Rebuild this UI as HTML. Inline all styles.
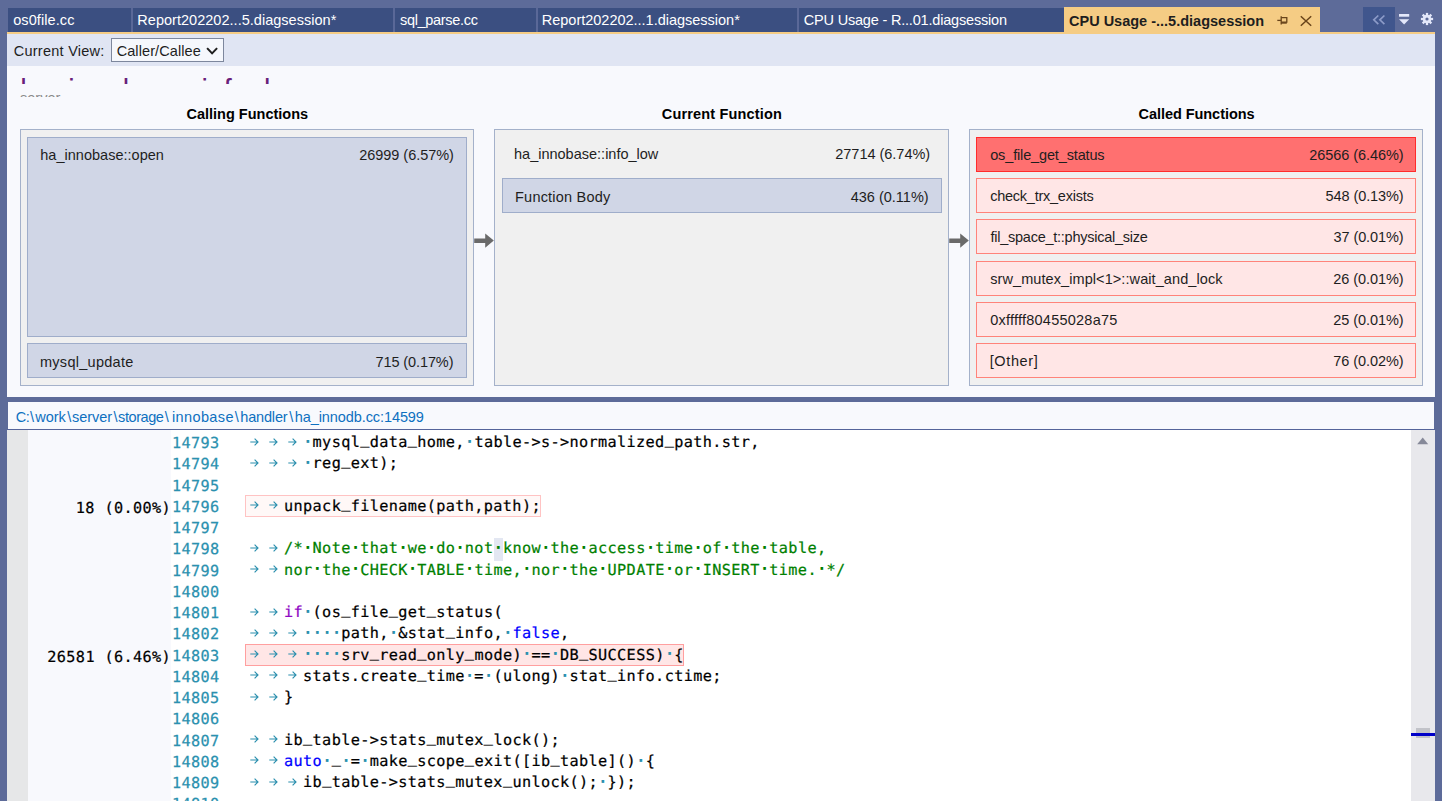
<!DOCTYPE html>
<html lang="en"><head><meta charset="utf-8"><title>CPU Usage - diagsession</title>
<style>
html,body{margin:0;padding:0}
body{width:1442px;height:801px;overflow:hidden;background:#5d6b99;position:relative;font-family:"Liberation Sans", sans-serif;}
.abs,.t,.box{position:absolute}
.t{white-space:pre;line-height:20px;font-family:"Liberation Sans", sans-serif}
.box{box-sizing:border-box}
.tab{position:absolute;top:8px;height:24px;background:#3b4f81}
.outer{position:absolute;box-sizing:border-box;top:129px;height:257px;background:#f0f0f0;border:1px solid #a4b1ca}
.rb{position:absolute;box-sizing:border-box;background:#d0d6e6;border:1px solid #9fadca}
.rr{position:absolute;box-sizing:border-box;background:#ffe6e6;border:1px solid #ff837a}
.code{position:absolute;left:247px;white-space:pre;font-family:"DejaVu Sans Mono", "Liberation Mono", monospace;font-size:15.2px;text-rendering:geometricPrecision;line-height:21.25px;height:21.25px;color:#000;letter-spacing:0.369px;-webkit-text-stroke:0.22px}
.ln{position:absolute;left:172.5px;white-space:pre;font-family:"DejaVu Sans Mono", "Liberation Mono", monospace;font-size:15.2px;text-rendering:geometricPrecision;line-height:21.25px;height:21.25px;color:#2b91af;letter-spacing:0.369px;-webkit-text-stroke:0.25px}
.pf{position:absolute;white-space:pre;font-family:"DejaVu Sans Mono", "Liberation Mono", monospace;font-size:15.2px;text-rendering:geometricPrecision;line-height:21.25px;height:21.25px;color:#000;text-align:right;width:164px;left:7px;letter-spacing:0.369px;-webkit-text-stroke:0.22px}
.ws{color:#2b91af}
.d{display:inline-block;width:9.52px;height:21.25px;line-height:21.25px;vertical-align:top;text-align:center;letter-spacing:0;font-size:16px;font-weight:bold;position:relative;top:-1.2px;-webkit-text-stroke:0}
.tb{display:inline-block;width:19.04px;letter-spacing:0;position:relative;height:21.25px;vertical-align:top}
.tb svg{position:absolute;left:3.6px;top:5.65px}
.u{position:relative;top:-2.8px}
.c{color:#008000}.k{color:#0000ff}.p{color:#8f08c4}
</style></head><body>

<div class="tab" style="left:8px;width:123px"></div>
<div class="tab" style="left:133px;width:260px"></div>
<div class="tab" style="left:395px;width:141px"></div>
<div class="tab" style="left:538px;width:259px"></div>
<div class="tab" style="left:799px;width:265px"></div>
<div class="abs" style="left:131px;top:8px;width:2px;height:23px;background:#5a6898"></div>
<div class="abs" style="left:393px;top:8px;width:2px;height:23px;background:#5a6898"></div>
<div class="abs" style="left:536px;top:8px;width:2px;height:23px;background:#5a6898"></div>
<div class="abs" style="left:797px;top:8px;width:2px;height:23px;background:#5a6898"></div>
<div class="abs" style="left:1064px;top:7px;width:256px;height:26px;background:#f5cc84"></div>
<div class="abs" style="left:7px;top:32px;width:1428px;height:2px;background:#f5cc84"></div>
<span id="tab1" class="t" style="left:13.20px;top:9.98px;font-size:14.5px;font-weight:400;color:#ffffff;letter-spacing:0.089px;">os0file.cc</span>
<span id="tab2" class="t" style="left:137.35px;top:9.98px;font-size:14.5px;font-weight:400;color:#ffffff;letter-spacing:0.023px;">Report202202...5.diagsession*</span>
<span id="tab3" class="t" style="left:400.00px;top:9.98px;font-size:14.5px;font-weight:400;color:#ffffff;letter-spacing:-0.318px;">sql_parse.cc</span>
<span id="tab4" class="t" style="left:541.75px;top:9.98px;font-size:14.5px;font-weight:400;color:#ffffff;letter-spacing:-0.009px;">Report202202...1.diagsession*</span>
<span id="tab5" class="t" style="left:803.75px;top:9.98px;font-size:14.5px;font-weight:400;color:#ffffff;letter-spacing:-0.190px;">CPU Usage - R...01.diagsession</span>
<span id="tab6" class="t" style="left:1069.00px;top:10.98px;font-size:14.5px;font-weight:700;color:#1e1e1e;letter-spacing:0.000px;">CPU Usage -...5.diagsession</span>
<svg class="abs" style="left:1275px;top:13px" width="14" height="14" viewBox="0 0 14 14"><g fill="none" stroke="#69441a" stroke-width="1.3"><path d="M2.3 7.4H6.2"/><path d="M6.2 3.2V11.4"/><path d="M6.2 4.6H11.8V9.2H6.2"/><path d="M6.2 9.9H11.8" stroke-width="1.6"/></g></svg>
<svg class="abs" style="left:1299px;top:14px" width="14" height="14" viewBox="0 0 14 14"><path d="M1.8 2.2L12.2 11.8M12.2 2.2L1.8 11.8" stroke="#69441a" stroke-width="1.5" fill="none"/></svg>
<div class="abs" style="left:1363px;top:7px;width:32px;height:25px;background:#40568d"></div>
<svg class="abs" style="left:1371px;top:13px" width="16" height="14" viewBox="0 0 16 14"><path d="M7.3 2.5L2.8 6.8L7.3 11.1M13.4 2.5L8.9 6.8L13.4 11.1" stroke="#8c9bc8" stroke-width="1.7" fill="none"/></svg>
<svg class="abs" style="left:1397px;top:12px" width="14" height="14" viewBox="0 0 14 14"><rect x="2" y="2" width="10.2" height="2.7" fill="#e4e8fa"/><path d="M2 7.2H12.2L7.1 12.4Z" fill="#e4e8fa"/></svg>
<svg class="abs" style="left:1420.1px;top:12px" width="14" height="14" viewBox="-7 -7 14 14"><rect x="-1.15" y="-6.1" width="2.3" height="3" transform="rotate(0)" fill="#e4e8fa"/><rect x="-1.15" y="-6.1" width="2.3" height="3" transform="rotate(45)" fill="#e4e8fa"/><rect x="-1.15" y="-6.1" width="2.3" height="3" transform="rotate(90)" fill="#e4e8fa"/><rect x="-1.15" y="-6.1" width="2.3" height="3" transform="rotate(135)" fill="#e4e8fa"/><rect x="-1.15" y="-6.1" width="2.3" height="3" transform="rotate(180)" fill="#e4e8fa"/><rect x="-1.15" y="-6.1" width="2.3" height="3" transform="rotate(225)" fill="#e4e8fa"/><rect x="-1.15" y="-6.1" width="2.3" height="3" transform="rotate(270)" fill="#e4e8fa"/><rect x="-1.15" y="-6.1" width="2.3" height="3" transform="rotate(315)" fill="#e4e8fa"/><circle r="2.95" fill="none" stroke="#e4e8fa" stroke-width="2.7"/></svg>
<div class="abs" style="left:7px;top:34px;width:1428px;height:32px;background:#e0e5f3"></div>
<span id="cv" class="t" style="left:13.75px;top:40.98px;font-size:14.5px;font-weight:400;color:#1e1e1e;letter-spacing:0.250px;">Current View:</span>
<div class="box" style="left:111px;top:38px;width:113px;height:24px;background:#f5f7fc;border:1px solid #7d879d"></div>
<span id="cc" class="t" style="left:116.65px;top:40.98px;font-size:14.5px;font-weight:400;color:#1e1e1e;letter-spacing:0.092px;">Caller/Callee</span>
<svg class="abs" style="left:205px;top:44px" width="14" height="12" viewBox="0 0 14 12"><path d="M2.1 4.1L7.1 9.4L12.1 4.1" stroke="#1e1e1e" stroke-width="2" fill="none"/></svg>
<div class="abs" style="left:7px;top:66px;width:1428px;height:331px;background:#f8f9fd"></div>
<div class="abs" style="left:7px;top:70px;width:700px;height:14px;overflow:hidden"><span id="hdr" class="t" style="left:13.2px;top:3.9px;font-size:28.85px;line-height:32px;color:#68217a;letter-spacing:0px">ha_innobase::info_low</span></div>
<div class="abs" style="left:7px;top:88px;width:300px;height:9px;overflow:hidden"><span id="srv" class="t" style="left:13px;top:0.1px;font-size:14.5px;color:#8a8a8a;letter-spacing:0px">server</span></div>
<span id="h1" class="t" style="left:186.50px;top:104.18px;font-size:14.5px;font-weight:700;color:#000;letter-spacing:0.000px;">Calling Functions</span>
<span id="h2" class="t" style="left:661.80px;top:104.18px;font-size:14.5px;font-weight:700;color:#000;letter-spacing:0.163px;">Current Function</span>
<span id="h3" class="t" style="left:1138.50px;top:104.18px;font-size:14.5px;font-weight:700;color:#000;letter-spacing:-0.050px;">Called Functions</span>
<div class="outer" style="left:20px;width:454px"></div>
<div class="outer" style="left:494px;width:455px"></div>
<div class="outer" style="left:969px;width:454px"></div>
<svg class="abs" style="left:474px;top:232px" width="20" height="18" viewBox="0 0 20 18"><path d="M0.2 6.4H11.2V1.6L19.8 8.6L11.2 15.8V11H0.2Z" fill="#6a6a6a"/></svg>
<svg class="abs" style="left:949px;top:232px" width="20" height="18" viewBox="0 0 20 18"><path d="M0.2 6.4H11.2V1.6L19.8 8.6L11.2 15.8V11H0.2Z" fill="#6a6a6a"/></svg>
<div class="rb" style="left:27px;top:137px;width:440px;height:200px"></div>
<div class="rb" style="left:27px;top:343px;width:440px;height:35px"></div>
<span id="p1a" class="t" style="left:40.25px;top:145.28px;font-size:14.5px;font-weight:400;color:#1e1e1e;letter-spacing:0.016px;">ha_innobase::open</span>
<span id="p1b" class="t" style="left:359.25px;top:145.28px;font-size:14.5px;font-weight:400;color:#1e1e1e;letter-spacing:-0.042px;">26999 (6.57%)</span>
<span id="p1c" class="t" style="left:40.00px;top:351.98px;font-size:14.5px;font-weight:400;color:#1e1e1e;letter-spacing:0.273px;">mysql_update</span>
<span id="p1d" class="t" style="left:375.45px;top:351.98px;font-size:14.5px;font-weight:400;color:#1e1e1e;letter-spacing:-0.095px;">715 (0.17%)</span>
<span id="p2a" class="t" style="left:514.00px;top:143.98px;font-size:14.5px;font-weight:400;color:#1e1e1e;letter-spacing:0.002px;">ha_innobase::info_low</span>
<span id="p2b" class="t" style="left:835.25px;top:143.98px;font-size:14.5px;font-weight:400;color:#1e1e1e;letter-spacing:-0.017px;">27714 (6.74%)</span>
<div class="rb" style="left:502px;top:178px;width:440px;height:35px"></div>
<span id="p2c" class="t" style="left:515.05px;top:186.58px;font-size:14.5px;font-weight:400;color:#1e1e1e;letter-spacing:0.204px;">Function Body</span>
<span id="p2d" class="t" style="left:850.75px;top:186.58px;font-size:14.5px;font-weight:400;color:#1e1e1e;letter-spacing:-0.005px;">436 (0.11%)</span>
<div class="rr" style="left:976px;top:137px;width:440px;height:35px;background:#ff7070;border-color:#ff2c2c;"></div>
<span id="p3n0" class="t" style="left:990.20px;top:145.48px;font-size:14.5px;font-weight:400;color:#1e1e1e;letter-spacing:-0.144px;">os_file_get_status</span>
<span id="p3v0" class="t" style="left:1309.25px;top:145.48px;font-size:14.5px;font-weight:400;color:#1e1e1e;letter-spacing:-0.067px;">26566 (6.46%)</span>
<div class="rr" style="left:976px;top:178px;width:440px;height:35px;"></div>
<span id="p3n1" class="t" style="left:990.20px;top:186.48px;font-size:14.5px;font-weight:400;color:#1e1e1e;letter-spacing:-0.243px;">check_trx_exists</span>
<span id="p3v1" class="t" style="left:1325.50px;top:186.48px;font-size:14.5px;font-weight:400;color:#1e1e1e;letter-spacing:-0.080px;">548 (0.13%)</span>
<div class="rr" style="left:976px;top:219px;width:440px;height:35px;"></div>
<span id="p3n2" class="t" style="left:990.45px;top:227.48px;font-size:14.5px;font-weight:400;color:#1e1e1e;letter-spacing:-0.246px;">fil_space_t::physical_size</span>
<span id="p3v2" class="t" style="left:1333.50px;top:227.48px;font-size:14.5px;font-weight:400;color:#1e1e1e;letter-spacing:-0.089px;">37 (0.01%)</span>
<div class="rr" style="left:976px;top:261px;width:440px;height:35px;"></div>
<span id="p3n3" class="t" style="left:990.20px;top:269.48px;font-size:14.5px;font-weight:400;color:#1e1e1e;letter-spacing:0.084px;">srw_mutex_impl&lt;1&gt;::wait_and_lock</span>
<span id="p3v3" class="t" style="left:1333.25px;top:269.48px;font-size:14.5px;font-weight:400;color:#1e1e1e;letter-spacing:-0.061px;">26 (0.01%)</span>
<div class="rr" style="left:976px;top:302px;width:440px;height:35px;"></div>
<span id="p3n4" class="t" style="left:990.20px;top:310.48px;font-size:14.5px;font-weight:400;color:#1e1e1e;letter-spacing:0.235px;">0xfffff80455028a75</span>
<span id="p3v4" class="t" style="left:1333.25px;top:310.48px;font-size:14.5px;font-weight:400;color:#1e1e1e;letter-spacing:-0.061px;">25 (0.01%)</span>
<div class="rr" style="left:976px;top:343px;width:440px;height:35px;"></div>
<span id="p3n5" class="t" style="left:989.70px;top:351.48px;font-size:14.5px;font-weight:400;color:#1e1e1e;letter-spacing:0.625px;">[Other]</span>
<span id="p3v5" class="t" style="left:1333.25px;top:351.48px;font-size:14.5px;font-weight:400;color:#1e1e1e;letter-spacing:-0.061px;">76 (0.02%)</span>
<div class="abs" style="left:8px;top:402px;width:1426px;height:27px;background:#f8f9fd"></div>
<span id="path0" class="t" style="left:15.65px;top:406.88px;font-size:14.5px;font-weight:400;color:#0e70c0;letter-spacing:-0.300px;">C:</span>
<span id="path1" class="t" style="left:30.10px;top:406.88px;font-size:14.5px;font-weight:400;color:#0e70c0;letter-spacing:0.000px;">\</span>
<span id="path2" class="t" style="left:35.20px;top:406.88px;font-size:14.5px;font-weight:400;color:#0e70c0;letter-spacing:0.000px;">work</span>
<span id="path3" class="t" style="left:67.15px;top:406.88px;font-size:14.5px;font-weight:400;color:#0e70c0;letter-spacing:0.000px;">\</span>
<span id="path4" class="t" style="left:72.00px;top:406.88px;font-size:14.5px;font-weight:400;color:#0e70c0;letter-spacing:-0.020px;">server</span>
<span id="path5" class="t" style="left:113.50px;top:406.88px;font-size:14.5px;font-weight:400;color:#0e70c0;letter-spacing:0.000px;">\</span>
<span id="path6" class="t" style="left:118.10px;top:406.88px;font-size:14.5px;font-weight:400;color:#0e70c0;letter-spacing:-0.425px;">storage</span>
<span id="path7" class="t" style="left:164.85px;top:406.88px;font-size:14.5px;font-weight:400;color:#0e70c0;letter-spacing:0.000px;">\</span>
<span id="path8" class="t" style="left:171.90px;top:406.88px;font-size:14.5px;font-weight:400;color:#0e70c0;letter-spacing:0.393px;">innobase</span>
<span id="path9" class="t" style="left:234.65px;top:406.88px;font-size:14.5px;font-weight:400;color:#0e70c0;letter-spacing:0.000px;">\</span>
<span id="path10" class="t" style="left:240.30px;top:406.88px;font-size:14.5px;font-weight:400;color:#0e70c0;letter-spacing:-0.175px;">handler</span>
<span id="path11" class="t" style="left:289.15px;top:406.88px;font-size:14.5px;font-weight:400;color:#0e70c0;letter-spacing:0.000px;">\</span>
<span id="path12" class="t" style="left:294.70px;top:406.88px;font-size:14.5px;font-weight:400;color:#0e70c0;letter-spacing:-0.082px;">ha_innodb.cc:14599</span>
<div class="abs" style="left:7px;top:429px;width:1428px;height:1px;background:#55649a"></div>
<div class="abs" style="left:7px;top:430px;width:1428px;height:371px;background:#fff;overflow:hidden" id="codewrap">
<div class="abs" style="left:0;top:0;width:21px;height:371px;background:#e6e7e8"></div>
<div class="abs" style="left:21px;top:0;width:143px;height:371px;background:#f8f9fd"></div>
<div class="abs" style="left:1404px;top:0;width:24px;height:371px;background:#e8e8ec"></div>
<svg class="abs" style="left:1404px;top:0" width="24" height="24" viewBox="0 0 24 24"><path d="M6.2 14.2H17.2L11.7 7.6Z" fill="#868999"/></svg>
<div class="abs" style="left:1409px;top:298px;width:14px;height:10px;background:#c2c3c9"></div>
<div class="abs" style="left:1404px;top:303.4px;width:24px;height:3px;background:#0000c8"></div>
<div class="ln" style="left:165px;top:3.00px">14793</div>
<div class="code" style="left:239px;top:2.00px"><span class="tb"><svg width="9" height="8" viewBox="0 0 9 8"><path d="M0.3 4H8M4.6 0.6L8 4L4.6 7.4" stroke="#2b8fae" stroke-width="1.15" fill="none"/></svg></span><span class="tb"><svg width="9" height="8" viewBox="0 0 9 8"><path d="M0.3 4H8M4.6 0.6L8 4L4.6 7.4" stroke="#2b8fae" stroke-width="1.15" fill="none"/></svg></span><span class="tb"><svg width="9" height="8" viewBox="0 0 9 8"><path d="M0.3 4H8M4.6 0.6L8 4L4.6 7.4" stroke="#2b8fae" stroke-width="1.15" fill="none"/></svg></span><span class="d ws">·</span>mysql<span class="u">_</span>data<span class="u">_</span>home,<span class="d ws">·</span>table-&gt;s-&gt;normalized<span class="u">_</span>path.str,</div>
<div class="ln" style="left:165px;top:24.25px">14794</div>
<div class="code" style="left:239px;top:23.25px"><span class="tb"><svg width="9" height="8" viewBox="0 0 9 8"><path d="M0.3 4H8M4.6 0.6L8 4L4.6 7.4" stroke="#2b8fae" stroke-width="1.15" fill="none"/></svg></span><span class="tb"><svg width="9" height="8" viewBox="0 0 9 8"><path d="M0.3 4H8M4.6 0.6L8 4L4.6 7.4" stroke="#2b8fae" stroke-width="1.15" fill="none"/></svg></span><span class="tb"><svg width="9" height="8" viewBox="0 0 9 8"><path d="M0.3 4H8M4.6 0.6L8 4L4.6 7.4" stroke="#2b8fae" stroke-width="1.15" fill="none"/></svg></span><span class="d ws">·</span>reg<span class="u">_</span>ext);</div>
<div class="ln" style="left:165px;top:45.50px">14795</div>
<div class="box" style="left:238px;top:65.00px;width:296.3px;height:22.4px;background:#fff8f7;border:1px solid #ffc3c3"></div>
<div class="ln" style="left:165px;top:66.75px">14796</div>
<div class="pf" style="left:0px;top:67.75px">18 (0.00%)</div>
<div class="code" style="left:239px;top:65.75px"><span class="tb"><svg width="9" height="8" viewBox="0 0 9 8"><path d="M0.3 4H8M4.6 0.6L8 4L4.6 7.4" stroke="#2b8fae" stroke-width="1.15" fill="none"/></svg></span><span class="tb"><svg width="9" height="8" viewBox="0 0 9 8"><path d="M0.3 4H8M4.6 0.6L8 4L4.6 7.4" stroke="#2b8fae" stroke-width="1.15" fill="none"/></svg></span>unpack<span class="u">_</span>filename(path,path);</div>
<div class="ln" style="left:165px;top:88.00px">14797</div>
<div class="abs" style="left:486.5px;top:108.25px;width:9.52px;height:22.5px;background:#e3e7f2"></div>
<div class="ln" style="left:165px;top:109.25px">14798</div>
<div class="code" style="left:239px;top:108.25px"><span class="tb"><svg width="9" height="8" viewBox="0 0 9 8"><path d="M0.3 4H8M4.6 0.6L8 4L4.6 7.4" stroke="#2b8fae" stroke-width="1.15" fill="none"/></svg></span><span class="tb"><svg width="9" height="8" viewBox="0 0 9 8"><path d="M0.3 4H8M4.6 0.6L8 4L4.6 7.4" stroke="#2b8fae" stroke-width="1.15" fill="none"/></svg></span><span class="c">/*<span class="d">·</span>Note<span class="d">·</span>that<span class="d">·</span>we<span class="d">·</span>do<span class="d">·</span>not<span class="d">·</span>know<span class="d">·</span>the<span class="d">·</span>access<span class="d">·</span>time<span class="d">·</span>of<span class="d">·</span>the<span class="d">·</span>table,</span></div>
<div class="ln" style="left:165px;top:130.50px">14799</div>
<div class="code" style="left:239px;top:129.50px"><span class="tb"><svg width="9" height="8" viewBox="0 0 9 8"><path d="M0.3 4H8M4.6 0.6L8 4L4.6 7.4" stroke="#2b8fae" stroke-width="1.15" fill="none"/></svg></span><span class="tb"><svg width="9" height="8" viewBox="0 0 9 8"><path d="M0.3 4H8M4.6 0.6L8 4L4.6 7.4" stroke="#2b8fae" stroke-width="1.15" fill="none"/></svg></span><span class="c">nor<span class="d">·</span>the<span class="d">·</span>CHECK<span class="d">·</span>TABLE<span class="d">·</span>time,<span class="d">·</span>nor<span class="d">·</span>the<span class="d">·</span>UPDATE<span class="d">·</span>or<span class="d">·</span>INSERT<span class="d">·</span>time.<span class="d">·</span>*/</span></div>
<div class="ln" style="left:165px;top:151.75px">14800</div>
<div class="ln" style="left:165px;top:173.00px">14801</div>
<div class="code" style="left:239px;top:172.00px"><span class="tb"><svg width="9" height="8" viewBox="0 0 9 8"><path d="M0.3 4H8M4.6 0.6L8 4L4.6 7.4" stroke="#2b8fae" stroke-width="1.15" fill="none"/></svg></span><span class="tb"><svg width="9" height="8" viewBox="0 0 9 8"><path d="M0.3 4H8M4.6 0.6L8 4L4.6 7.4" stroke="#2b8fae" stroke-width="1.15" fill="none"/></svg></span><span class="p">if</span><span class="d ws">·</span>(os<span class="u">_</span>file<span class="u">_</span>get<span class="u">_</span>status(</div>
<div class="ln" style="left:165px;top:194.25px">14802</div>
<div class="code" style="left:239px;top:193.25px"><span class="tb"><svg width="9" height="8" viewBox="0 0 9 8"><path d="M0.3 4H8M4.6 0.6L8 4L4.6 7.4" stroke="#2b8fae" stroke-width="1.15" fill="none"/></svg></span><span class="tb"><svg width="9" height="8" viewBox="0 0 9 8"><path d="M0.3 4H8M4.6 0.6L8 4L4.6 7.4" stroke="#2b8fae" stroke-width="1.15" fill="none"/></svg></span><span class="tb"><svg width="9" height="8" viewBox="0 0 9 8"><path d="M0.3 4H8M4.6 0.6L8 4L4.6 7.4" stroke="#2b8fae" stroke-width="1.15" fill="none"/></svg></span><span class="d ws">·</span><span class="d ws">·</span><span class="d ws">·</span><span class="d ws">·</span>path,<span class="d ws">·</span>&amp;stat<span class="u">_</span>info,<span class="d ws">·</span><span class="k">false</span>,</div>
<div class="box" style="left:238px;top:214.00px;width:439.1px;height:22px;background:#ffe6e6;border:1px solid #ff9f9f"></div>
<div class="ln" style="left:165px;top:215.50px">14803</div>
<div class="pf" style="left:0px;top:216.50px">26581 (6.46%)</div>
<div class="code" style="left:239px;top:214.50px"><span class="tb"><svg width="9" height="8" viewBox="0 0 9 8"><path d="M0.3 4H8M4.6 0.6L8 4L4.6 7.4" stroke="#2b8fae" stroke-width="1.15" fill="none"/></svg></span><span class="tb"><svg width="9" height="8" viewBox="0 0 9 8"><path d="M0.3 4H8M4.6 0.6L8 4L4.6 7.4" stroke="#2b8fae" stroke-width="1.15" fill="none"/></svg></span><span class="tb"><svg width="9" height="8" viewBox="0 0 9 8"><path d="M0.3 4H8M4.6 0.6L8 4L4.6 7.4" stroke="#2b8fae" stroke-width="1.15" fill="none"/></svg></span><span class="d ws">·</span><span class="d ws">·</span><span class="d ws">·</span><span class="d ws">·</span>srv<span class="u">_</span>read<span class="u">_</span>only<span class="u">_</span>mode)<span class="d ws">·</span>==<span class="d ws">·</span>DB<span class="u">_</span>SUCCESS)<span class="d ws">·</span>{</div>
<div class="ln" style="left:165px;top:236.75px">14804</div>
<div class="code" style="left:239px;top:235.75px"><span class="tb"><svg width="9" height="8" viewBox="0 0 9 8"><path d="M0.3 4H8M4.6 0.6L8 4L4.6 7.4" stroke="#2b8fae" stroke-width="1.15" fill="none"/></svg></span><span class="tb"><svg width="9" height="8" viewBox="0 0 9 8"><path d="M0.3 4H8M4.6 0.6L8 4L4.6 7.4" stroke="#2b8fae" stroke-width="1.15" fill="none"/></svg></span><span class="tb"><svg width="9" height="8" viewBox="0 0 9 8"><path d="M0.3 4H8M4.6 0.6L8 4L4.6 7.4" stroke="#2b8fae" stroke-width="1.15" fill="none"/></svg></span>stats.create<span class="u">_</span>time<span class="d ws">·</span>=<span class="d ws">·</span>(ulong)<span class="d ws">·</span>stat<span class="u">_</span>info.ctime;</div>
<div class="ln" style="left:165px;top:258.00px">14805</div>
<div class="code" style="left:239px;top:257.00px"><span class="tb"><svg width="9" height="8" viewBox="0 0 9 8"><path d="M0.3 4H8M4.6 0.6L8 4L4.6 7.4" stroke="#2b8fae" stroke-width="1.15" fill="none"/></svg></span><span class="tb"><svg width="9" height="8" viewBox="0 0 9 8"><path d="M0.3 4H8M4.6 0.6L8 4L4.6 7.4" stroke="#2b8fae" stroke-width="1.15" fill="none"/></svg></span>}</div>
<div class="ln" style="left:165px;top:279.25px">14806</div>
<div class="ln" style="left:165px;top:300.50px">14807</div>
<div class="code" style="left:239px;top:299.50px"><span class="tb"><svg width="9" height="8" viewBox="0 0 9 8"><path d="M0.3 4H8M4.6 0.6L8 4L4.6 7.4" stroke="#2b8fae" stroke-width="1.15" fill="none"/></svg></span><span class="tb"><svg width="9" height="8" viewBox="0 0 9 8"><path d="M0.3 4H8M4.6 0.6L8 4L4.6 7.4" stroke="#2b8fae" stroke-width="1.15" fill="none"/></svg></span>ib<span class="u">_</span>table-&gt;stats<span class="u">_</span>mutex<span class="u">_</span>lock();</div>
<div class="ln" style="left:165px;top:321.75px">14808</div>
<div class="code" style="left:239px;top:320.75px"><span class="tb"><svg width="9" height="8" viewBox="0 0 9 8"><path d="M0.3 4H8M4.6 0.6L8 4L4.6 7.4" stroke="#2b8fae" stroke-width="1.15" fill="none"/></svg></span><span class="tb"><svg width="9" height="8" viewBox="0 0 9 8"><path d="M0.3 4H8M4.6 0.6L8 4L4.6 7.4" stroke="#2b8fae" stroke-width="1.15" fill="none"/></svg></span><span class="k">auto</span><span class="d ws">·</span><span class="u">_</span><span class="d ws">·</span>=<span class="d ws">·</span>make<span class="u">_</span>scope<span class="u">_</span>exit([ib<span class="u">_</span>table]()<span class="d ws">·</span>{</div>
<div class="ln" style="left:165px;top:343.00px">14809</div>
<div class="code" style="left:239px;top:342.00px"><span class="tb"><svg width="9" height="8" viewBox="0 0 9 8"><path d="M0.3 4H8M4.6 0.6L8 4L4.6 7.4" stroke="#2b8fae" stroke-width="1.15" fill="none"/></svg></span><span class="tb"><svg width="9" height="8" viewBox="0 0 9 8"><path d="M0.3 4H8M4.6 0.6L8 4L4.6 7.4" stroke="#2b8fae" stroke-width="1.15" fill="none"/></svg></span><span class="tb"><svg width="9" height="8" viewBox="0 0 9 8"><path d="M0.3 4H8M4.6 0.6L8 4L4.6 7.4" stroke="#2b8fae" stroke-width="1.15" fill="none"/></svg></span>ib<span class="u">_</span>table-&gt;stats<span class="u">_</span>mutex<span class="u">_</span>unlock();<span class="d ws">·</span>});</div>
<div class="ln" style="left:165px;top:364.25px">14810</div>
</div>
</body></html>
